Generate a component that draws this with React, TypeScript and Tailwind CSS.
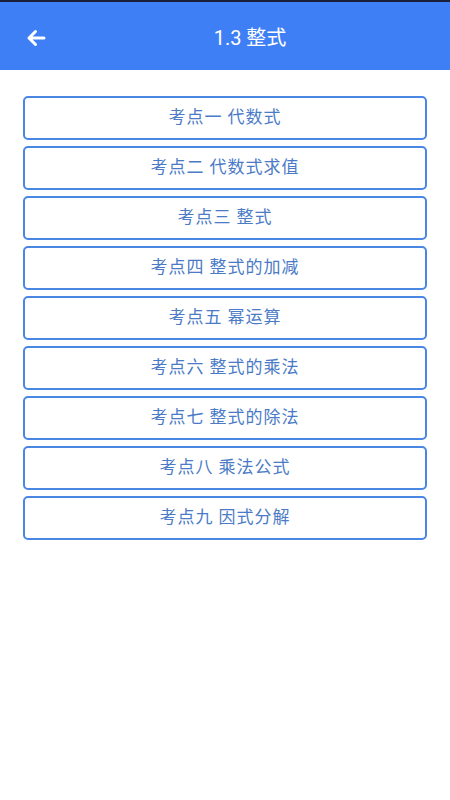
const items = [
  '考点一 代数式',
  '考点二 代数式求值',
  '考点三 整式',
  '考点四 整式的加减',
  '考点五 幂运算',
  '考点六 整式的乘法',
  '考点七 整式的除法',
  '考点八 乘法公式',
  '考点九 因式分解',
]

export default function App() {
  return (
    <div
      className="w-[450px] h-[800px] bg-white flex flex-col"
      style={{ fontFamily: 'Roboto, "Noto Sans CJK SC", sans-serif' }}
    >
      <div className="h-[2px] bg-[#1a1f3a]" />
      <header className="h-[68px] bg-[#3e7ff6] flex items-center pl-[50px] relative">
        <button className="absolute left-[26px] top-[27px] text-white">
          <svg width="20" height="18" viewBox="0 0 20 18" fill="none">
            <path
              d="M18 9H3M9.5 2.5L3 9l6.5 6.5"
              stroke="white"
              strokeWidth="3"
              strokeLinecap="round"
              strokeLinejoin="round"
            />
          </svg>
        </button>
        <h1 className="flex-1 text-center text-white text-[20px] pt-[4px]">1.3 整式</h1>
      </header>

      <div className="flex flex-col gap-[6px] px-[23px] pt-[26px]">
        {items.map((t) => (
          <button
            key={t}
            className="h-[44px] w-full rounded-[5px] border-2 border-[#4a86e4] bg-white text-[17px] text-[#4b7bc6] tracking-[1px] flex items-center justify-center"
          >
            {t}
          </button>
        ))}
      </div>
    </div>
  )
}
